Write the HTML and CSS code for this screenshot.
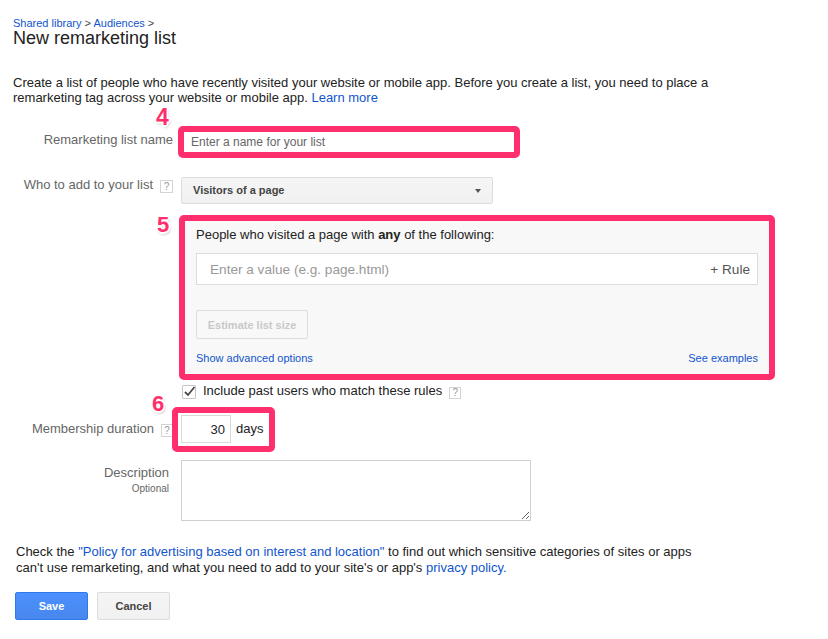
FILE: index.html
```html
<!DOCTYPE html>
<html lang="en">
<head>
<meta charset="utf-8">
<title>New remarketing list</title>
<link rel="stylesheet" href="styles.css">
</head>
<body>
<div class="page">
  <div class="crumbs"><a href="#">Shared library</a> &gt; <a href="#">Audiences</a> &gt;</div>
  <h1 class="title">New remarketing list</h1>
  <p class="intro">Create a list of people who have recently visited your website or mobile app. Before you create a list, you need to place a remarketing tag across your website or mobile app. <a href="#">Learn more</a></p>

  <div class="row row-name">
    <div class="label"><span>Remarketing list name</span></div>
    <div class="field">
      <div class="hl hl-name">
        <span class="badge badge-4">4</span>
        <input class="name-input" type="text" placeholder="Enter a name for your list">
      </div>
    </div>
  </div>

  <div class="row row-who">
    <div class="label"><span>Who to add to your list</span><span class="help">?</span></div>
    <div class="field">
      <div class="select"><span>Visitors of a page</span><span class="caret"></span></div>
    </div>
  </div>

  <div class="row row-rules">
    <div class="label"></div>
    <div class="field">
      <div class="hl hl-rules">
        <span class="badge badge-5">5</span>
        <div class="rules-title">People who visited a page with <b>any</b> of the following:</div>
        <div class="rule-input">
          <input class="rule-value" type="text" placeholder="Enter a value (e.g. page.html)">
          <span class="add-rule">+ Rule</span>
        </div>
        <button class="btn-estimate" type="button" disabled>Estimate list size</button>
        <div class="rules-links"><a href="#">Show advanced options</a><a href="#">See examples</a></div>
      </div>
    </div>
  </div>

  <div class="row row-past">
    <div class="label"></div>
    <div class="field past">
      <span class="checkbox"><svg width="15" height="15" viewBox="0 0 15 15"><polyline points="3,8 6,11 12.5,3" fill="none" stroke="#4a4a4a" stroke-width="1.8"/></svg></span>
      <span class="past-text">Include past users who match these rules</span>
      <span class="help">?</span>
    </div>
  </div>

  <div class="row row-duration">
    <div class="label"><span>Membership duration</span><span class="help">?</span></div>
    <div class="field">
      <div class="hl hl-days">
        <span class="badge badge-6">6</span>
        <input class="days-input" type="text" value="30">
        <span class="days">days</span>
      </div>
    </div>
  </div>

  <div class="row row-desc">
    <div class="label desc-label"><span>Description</span><span class="optional">Optional</span></div>
    <div class="field">
      <textarea class="desc"></textarea>
    </div>
  </div>

  <p class="policy">Check the <a href="#">"Policy for advertising based on interest and location"</a> to find out which sensitive categories of sites or apps can't use remarketing, and what you need to add to your site's or app's <a href="#">privacy policy.</a></p>

  <div class="actions">
    <button class="btn btn-save" type="button">Save</button>
    <button class="btn btn-cancel" type="button">Cancel</button>
  </div>
</div>
</body>
</html>
```
FILE: styles.css
```css
* { box-sizing: border-box; }
html, body { margin: 0; padding: 0; background: #fff; }
body {
  font-family: "Liberation Sans", Arial, sans-serif;
  font-size: 13px;
  color: #222;
}
a { color: #1155cc; text-decoration: none; }

.page { padding: 0 0 0 13px; position: relative; }

.crumbs {
  padding-top: 17.7px;
  font-size: 11px;
  line-height: 11px;
  color: #444;
}
.title {
  margin: 0;
  font-size: 18px;
  line-height: 18px;
  font-weight: normal;
  color: #222;
}
.intro {
  margin: 28px 0 0;
  line-height: 15px;
  max-width: 740px;
}

.row { display: flex; align-items: flex-start; }
.label {
  width: 160px;
  flex: none;
  display: flex;
  justify-content: flex-end;
  align-items: flex-start;
  color: #666;
  line-height: 16px;
}
.field { margin-left: 8px; position: relative; }

.help {
  width: 13px;
  height: 13px;
  margin-left: 7px;
  margin-top: 3px;
  border: 1px solid #d4d4d4;
  color: #999;
  font-size: 10px;
  line-height: 11px;
  text-align: center;
  flex: none;
  background: #fff;
}

/* highlight frames */
.hl {
  position: relative;
  border: 6px solid #ff2f6d;
  border-radius: 5px;
  background: #fff;
}
.badge {
  position: absolute;
  font-size: 22px;
  line-height: 22px;
  font-weight: bold;
  color: #ff2f6d;
  text-shadow:
    -1.5px 0 0 #fff, 1.5px 0 0 #fff, 0 -1.5px 0 #fff, 0 1.5px 0 #fff,
    -1px -1px 0 #fff, 1px 1px 0 #fff, -1px 1px 0 #fff, 1px -1px 0 #fff,
    1px 2px 3px rgba(0,0,0,0.35);
}

/* row 1 */
.row-name { margin-top: 21.5px; }
.row-name .label { padding-top: 6px; }
.hl-name { width: 342px; margin-left: -3px; }
.badge-4 { left: -28px; top: -26px; font-size: 23px; }
.name-input {
  display: block;
  width: 100%;
  height: 20px;
  border: none;
  outline: none;
  padding: 0 0 1px 7px;
  font-family: "Liberation Sans", Arial, sans-serif;
  font-size: 12px;
  color: #222;
  background: #fff;
}
.name-input::placeholder { color: #666; }

/* row 2 */
.row-who { margin-top: 19px; }
.select {
  width: 312px;
  height: 27px;
  border: 1px solid #dcdcdc;
  border-radius: 2px;
  background: linear-gradient(#f5f5f5, #f1f1f1);
  display: flex;
  align-items: center;
  justify-content: space-between;
  padding: 0 11px 0 11px;
  font-size: 11px;
  line-height: 13px;
  font-weight: bold;
  color: #444;
}
.caret {
  width: 0; height: 0;
  border-left: 3.5px solid transparent;
  border-right: 3.5px solid transparent;
  border-top: 4px solid #555;
}

/* rules box */
.row-rules { margin-top: 11px; }
.hl-rules {
  width: 596px;
  margin-left: -2px;
  background: #f8f8f8;
  padding: 6px 11px 9px 11px;
}
.badge-5 { left: -28px; top: -7px; }
.rules-title { line-height: 16px; color: #222; }
.rules-title b { font-weight: bold; }
.rule-input {
  margin-top: 10px;
  height: 32px;
  border: 1px solid #dcdcdc;
  background: #fff;
  display: flex;
  align-items: center;
  padding: 0 7px 0 13px;
}
.rule-value {
  flex: 1;
  border: none;
  outline: none;
  padding: 0;
  height: 28px;
  font-family: "Liberation Sans", Arial, sans-serif;
  font-size: 13.6px;
  background: transparent;
  color: #222;
}
.rule-value::placeholder { color: #999; }
.add-rule { font-size: 13.6px; color: #555; }
.btn-estimate {
  display: block;
  margin-top: 25px;
  width: 112px;
  height: 29px;
  border: 1px solid #dcdcdc;
  border-radius: 2px;
  background: #f8f8f8;
  font-family: "Liberation Sans", Arial, sans-serif;
  font-size: 11px;
  font-weight: bold;
  color: #c8c8c8;
  padding: 0;
}
.rules-links {
  margin-top: 12px;
  display: flex;
  justify-content: space-between;
  font-size: 11px;
  line-height: 14px;
}

/* checkbox row */
.row-past { margin-top: 3px; }
.past { display: flex; align-items: flex-start; line-height: 16px; }
.checkbox {
  width: 14px;
  height: 14px;
  margin: 2px 0 0 1px;
  border: 1px solid #c6c6c6;
  border-radius: 1px;
  background: #fff;
  position: relative;
  flex: none;
}
.checkbox svg { position: absolute; left: -1px; top: -2px; }
.past-text { margin-left: 7px; color: #222; }
.past .help { margin-top: 4px; width: 12px; height: 12px; line-height: 10px; }

/* duration */
.row-duration { margin-top: 8px; }
.row-duration .label { padding-top: 14px; }
.row-duration .label .help { width: 12px; }
.hl-days {
  margin-left: -9px;
  display: flex;
  align-items: center;
  padding: 2px 6px 3px 3px;
}
.badge-6 { left: -26px; top: -20px; }
.days-input {
  width: 50px;
  height: 28px;
  border: 1px solid #d9d9d9;
  outline: none;
  text-align: right;
  padding: 0 5px 0 0;
  font-family: "Liberation Sans", Arial, sans-serif;
  font-size: 13px;
  color: #222;
  background: #fff;
}
.days { margin-left: 5px; color: #222; line-height: 16px; }

/* description */
.row-desc { margin-top: 7.5px; }
.desc-label {
  flex-direction: column;
  align-items: flex-end;
  padding-top: 5.5px;
  padding-right: 4px;
}
.optional { font-size: 10px; line-height: 14px; margin-top: 1px; }
.desc {
  display: block;
  width: 350px;
  height: 61px;
  border: 1px solid #d0d0d0;
  margin: 0;
  font-family: "Liberation Sans", Arial, sans-serif;
  font-size: 13px;
}

/* policy */
.policy {
  margin: 23.5px 0 0 3px;
  line-height: 16px;
  max-width: 690px;
}

.actions { margin-top: 16px; margin-left: 2px; display: flex; gap: 9px; }
.btn {
  width: 73px;
  height: 28px;
  border-radius: 2px;
  font-family: "Liberation Sans", Arial, sans-serif;
  font-size: 11px;
  font-weight: bold;
  padding: 0;
}
.btn-save {
  background: linear-gradient(#4d90fe, #4787ed);
  border: 1px solid #3079ed;
  color: #fff;
}
.btn-cancel {
  background: linear-gradient(#f5f5f5, #f1f1f1);
  border: 1px solid #dcdcdc;
  color: #444;
}
```
